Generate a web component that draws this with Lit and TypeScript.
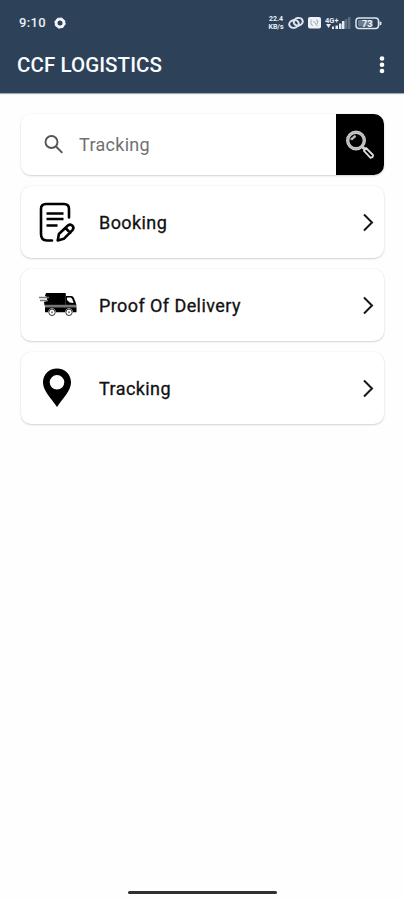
import { LitElement, html, css, svg } from "lit";
import { customElement, property } from "lit/decorators.js";

const icons: Record<string, unknown> = {
  booking: svg`
    <g fill="none" stroke="#000" stroke-width="2.600" stroke-linecap="round" stroke-linejoin="round">
      <path d="M31 17.500V9q0-5-5-5H8Q3 4 3 9v25q0 6.500 6 6.500h5"/>
      <path d="M8.500 13.500h17M8.500 19h17M8.500 25.500h11" stroke-width="2.400" stroke-linecap="butt"/>
      <path d="M19.700 40.500l1.200-6.500 9-8.500q2.500-2 4.500.2t.1 4.400l-8.700 8.700zM27.500 28l4.800 4.800"/>
    </g>`,
  truck: svg`
    <path d="M8 10h19q.8 0 .8 1v11.500H6.500L6 19l3-1V14l-2-1z"/>
    <path d="M1 14.500h10M2 17.500h8" stroke="#777" stroke-width="1.500"/>
    <path d="M28 13h5.500q1.500 0 2.300 1.800l1.700 4.200 1 3.500H28z"/>
    <path d="M29 14.500h3.500q1 0 1.700 1.500l1.500 4-4-.5-2.700-2.500z" fill="#fff"/>
    <path d="M7 21.800h31.500v2.400H7z" fill="#777"/>
    <path d="M7 24.200h31.500v5H35q-1-4-4-4t-4 4h-9q-1-4-4-4t-4 4H7z"/>
    <g fill="#fff" stroke="#333" stroke-width="1"><circle cx="14" cy="29.300" r="3.200"/><circle cx="31" cy="29.300" r="3.200"/></g>
    <circle cx="14" cy="29.300" r="1" fill="#777"/><circle cx="31" cy="29.300" r="1" fill="#777"/>`,
  pin: svg`
    <path fill-rule="evenodd" d="M19 2.500C11 2.500 5 8.500 5 16.500c0 8 8 15.500 14 24.500 6-9 14-16.500 14-24.500C33 8.500 27 2.500 19 2.500zm0 6.500a7.300 7.300 0 1 1 0 14.600A7.300 7.300 0 0 1 19 9z"/>`,
};

@customElement("status-bar")
export class StatusBar extends LitElement {
  static styles = css`
    :host { display: flex; height: 46px; padding: 0 22px 0 19px; align-items: center; justify-content: space-between; color: #e9eff8; font: 500 13px/46px Roboto, sans-serif; }
    .left { display: flex; align-items: center; gap: 8px; letter-spacing: 0.35px; }
    .right { display: flex; align-items: center; gap: 4px; }
    .rate { display: flex; flex-direction: column; width: 16px; font: 700 7px/8px Roboto, sans-serif; text-align: center; }
    svg { display: block; }
    .small { font: 700 7.5px Roboto, sans-serif; }
    .level { font: 700 9px Roboto, sans-serif; }
  `;
  render() {
    return html`
      <div class="left"><span>9:10</span>
        <svg width="12" height="12" viewBox="0 0 12 12" fill="none" stroke="#f2f6fc">
          <circle cx="6" cy="6" r="3.900" stroke-width="2.800"/>
          <circle cx="6" cy="6" r="5.200" stroke-width="1" stroke-dasharray="2 2.080"/>
        </svg>
      </div>
      <div class="right">
        <div class="rate"><span>22.4</span><span>KB/s</span></div>
        <svg width="16" height="14" viewBox="0 0 16 14" fill="none" stroke="#dfe7f1" stroke-width="2">
          <ellipse cx="6" cy="8" rx="4.800" ry="3.800" transform="rotate(-12 6 8)"/>
          <ellipse cx="10.300" cy="5.800" rx="4.500" ry="3.800" transform="rotate(-12 10 6)"/>
        </svg>
        <svg width="13" height="12" viewBox="0 0 13 12">
          <rect width="13" height="11.500" rx="2" fill="#eef2f7"/>
          <path d="M3 2.500v5l2 1M5.500 4l4 5M8 3l2 1-1 3" fill="none" stroke="#9eabb9"/>
        </svg>
        <svg width="26" height="14" viewBox="0 0 26 14" fill="#e4ebf3">
          <text x="0" y="6.500" class="small">4G+</text>
          <path d="M1 8h5L3.500 12zM7 10.500h2V13H7zM10.500 9.500h2.500V13h-2.500zM14 7.500h2.500V13H14zM17 5h2.500v8H17z"/>
          <path d="M20 3h2.500v10H20zM23 1h2.500v12H23z" opacity=".25"/>
        </svg>
        <svg width="27" height="13" viewBox="0 0 27 13">
          <rect x="1" y="1" width="22.500" height="10.500" rx="3" fill="none" stroke="#dde5ee" stroke-width="1.500"/>
          <path d="M24.500 4l2 1.200v2.300l-2 1.200z" fill="#dde5ee"/>
          <rect x="3" y="3" width="15" height="6.500" rx="1" fill="#a9b6c4" opacity=".5"/>
          <text x="7" y="9.500" class="level" fill="#f2f6fa">73</text>
        </svg>
      </div>`;
  }
}

@customElement("menu-card")
export class MenuCard extends LitElement {
  @property() icon = "";
  @property() label = "";
  static styles = css`
    :host { display: flex; box-sizing: border-box; height: 72px; padding: 0 9px 0 17px; align-items: center; background: #fff; border-radius: 10px; box-shadow: 0 1px 2px rgba(0,0,0,.16), 0 0 2px rgba(0,0,0,.07); }
    .label { flex: 1; margin-left: 21px; padding-top: 2px; font: 400 18px/24px Roboto, sans-serif; letter-spacing: 0.42px; color: #111; -webkit-text-stroke: 0.3px #111; }
    svg { display: block; }
  `;
  render() {
    return html`
      <svg width="40" height="44" viewBox="0 0 40 44">${icons[this.icon]}</svg>
      <span class="label">${this.label}</span>
      <svg width="14" height="20" viewBox="0 0 14 20" fill="none" stroke="#161616" stroke-width="2"><path d="M3 2.500l8 8-8 8"/></svg>`;
  }
}

@customElement("app-root")
export class AppRoot extends LitElement {
  static styles = css`
    :host { display: flex; flex-direction: column; box-sizing: border-box; width: 100%; height: 900px; background: #fefefe; font-family: Roboto, sans-serif; }
    header { height: 93px; background: #2d4259; box-shadow: 0 1px 1px rgba(30,45,65,.4); }
    .bar { display: flex; height: 38px; align-items: center; justify-content: space-between; padding: 0 19px 0 17px; }
    h1 { margin: 0; color: #fafcff; font: 500 20.5px/28px Roboto, sans-serif; letter-spacing: 0.08px; }
    svg { display: block; }
    main { flex: 1; padding: 21px 20px 0 21px; }
    .search { display: flex; height: 61px; overflow: hidden; align-items: center; background: #fff; border-radius: 10px; }
    .wrap { margin-bottom: 11px; border-radius: 10px; box-shadow: 0 1px 2px rgba(0,0,0,.16), 0 0 2px rgba(0,0,0,.07); }
    .glass { margin-left: 22px; }
    .hint { flex: 1; margin-left: 14px; color: #707070; font-size: 18px; letter-spacing: 0.3px; }
    .go { display: flex; width: 48px; height: 61px; align-items: center; justify-content: center; background: #000; }
    .list { display: flex; flex-direction: column; gap: 11px; }
    footer { display: flex; height: 9px; align-items: flex-start; justify-content: center; }
    .home { width: 149px; height: 3px; border-radius: 2px; background: #303030; }
  `;
  render() {
    return html`
      <header>
        <status-bar></status-bar>
        <div class="bar">
          <h1>CCF LOGISTICS</h1>
          <svg width="6" height="20" viewBox="0 0 6 20" fill="#fff"><circle cx="3" cy="3.500" r="2.300"/><circle cx="3" cy="9.700" r="2.300"/><circle cx="3" cy="16" r="2.300"/></svg>
        </div>
      </header>
      <main>
        <div class="wrap"><div class="search">
          <svg class="glass" width="22" height="22" viewBox="0 0 22 22" fill="none" stroke="#555" stroke-width="1.900"><circle cx="8.500" cy="8" r="6"/><path d="M13 12.500l6.300 6.300"/></svg>
          <span class="hint">Tracking</span>
          <div class="go">
            <svg width="30" height="30" viewBox="0 0 30 30" fill="none">
              <circle cx="11" cy="10.500" r="8.300" stroke="#c8c8c8" stroke-width="3.400"/>
              <circle cx="11" cy="10.500" r="8.300" stroke="#aaa" stroke-width=".6"/>
              <path d="M5.500 9l4-3.500 1.500 1-4 3.500z" fill="#bbb" stroke="#bbb"/>
              <path d="M17 16.500l3 3" stroke="#ccc" stroke-width="3"/>
              <path d="M21 18l7 7q.5 2.500-2.500 2.800l-6.500-7z" stroke="#ddd" stroke-width="1.800" stroke-linejoin="round"/>
            </svg>
          </div>
        </div></div>
        <div class="list">
          <menu-card icon="booking" label="Booking"></menu-card>
          <menu-card icon="truck" label="Proof Of Delivery"></menu-card>
          <menu-card icon="pin" label="Tracking"></menu-card>
        </div>
      </main>
      <footer><div class="home"></div></footer>`;
  }
}
